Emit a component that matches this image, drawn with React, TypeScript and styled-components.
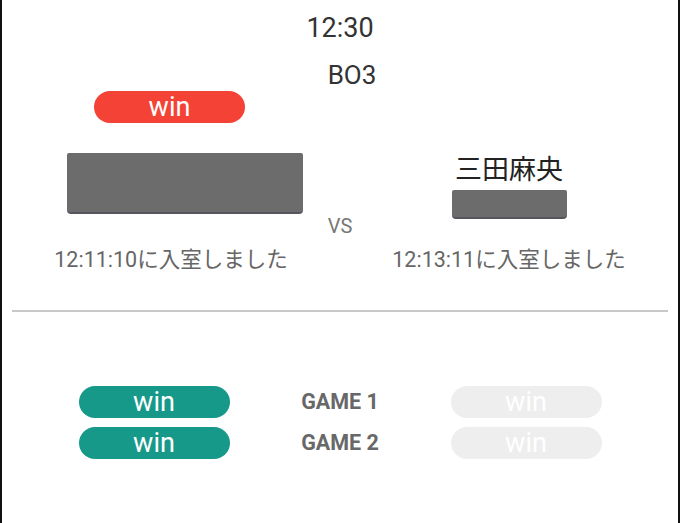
import React from "react";
import styled, { createGlobalStyle } from "styled-components";

const Global = createGlobalStyle`
  html, body { margin: 0; padding: 0; background: #ffffff; }
  body { font-family: Roboto, "Noto Sans CJK JP", sans-serif; }
`;

const Frame = styled.div`
  box-sizing: border-box;
  width: 680px;
  height: 523px;
  border-left: 2px solid #111;
  border-right: 2px solid #111;
  background: #fff;
  overflow: hidden;
`;

const Header = styled.header`
  display: flex;
  flex-direction: column;
  align-items: center;
  padding-top: 12px;
`;

const Clock = styled.div`
  font-size: 27px;
  line-height: 32px;
  color: #333;
`;

const Format = styled.div`
  margin-top: 15px;
  padding-left: 24px;
  font-size: 26px;
  line-height: 32px;
  color: #333;
`;

const PlayersGrid = styled.section`
  display: grid;
  grid-template-columns: 1fr 1fr;
`;

const PlayerCol = styled.div<{ $top?: number }>`
  display: flex;
  flex-direction: column;
  align-items: center;
  padding-top: ${(p) => p.$top ?? 0}px;
`;

const Pill = styled.div<{ $bg: string; $shift?: number }>`
  width: 151px;
  height: 32px;
  margin-left: ${(p) => p.$shift ?? 0}px;
  border-radius: 16px;
  background: ${(p) => p.$bg};
  color: #fff;
  font-size: 27px;
  line-height: 32px;
  text-align: center;
`;

const NameBlock = styled.div<{ $w: number; $h: number; $mt: number; $shift?: number }>`
  width: ${(p) => p.$w}px;
  height: ${(p) => p.$h}px;
  margin-top: ${(p) => p.$mt}px;
  margin-left: ${(p) => (p.$shift ?? 0) * 2}px;
  box-sizing: border-box;
  background: #6c6c6c;
  border-bottom: 2px solid #55555e;
  border-radius: 2px 2px 4px 4px;
`;

const PlayerName = styled.div`
  font-size: 27px;
  line-height: 32px;
  color: #222;
`;

const Vs = styled.div`
  margin-top: -2px;
  text-align: center;
  font-size: 20px;
  line-height: 18px;
  color: #777;
`;

const JoinRow = styled.div`
  display: grid;
  grid-template-columns: 1fr 1fr;
  margin-top: 13px;
`;

const JoinText = styled.div`
  text-align: center;
  font-size: 21.5px;
  line-height: 24px;
  color: #666;
`;

const Divider = styled.hr`
  margin: 38px 10px 0;
  border: none;
  height: 2px;
  background: #c9c9c9;
`;

const Games = styled.section`
  display: grid;
  grid-template-columns: repeat(3, 186px);
  justify-content: center;
  justify-items: center;
  align-items: center;
  row-gap: 9px;
  margin-top: 74px;
`;

const GameLabel = styled.div`
  font-size: 21.5px;
  font-weight: 700;
  color: #686868;
  line-height: 32px;
`;

const games = [
  { label: "GAME 1" },
  { label: "GAME 2" },
];

export default function App() {
  return (
    <>
      <Global />
      <Frame>
        <Header>
          <Clock>12:30</Clock>
          <Format>BO3</Format>
        </Header>
        <PlayersGrid>
          <PlayerCol>
            <Pill $bg="#f44336" $shift={-3}>win</Pill>
            <NameBlock $w={236} $h={61} $mt={30} $shift={14} />
          </PlayerCol>
          <PlayerCol $top={63}>
            <PlayerName>三田麻央</PlayerName>
            <NameBlock $w={115} $h={29} $mt={4} />
          </PlayerCol>
        </PlayersGrid>
        <Vs>VS</Vs>
        <JoinRow>
          <JoinText>12:11:10に入室しました</JoinText>
          <JoinText>12:13:11に入室しました</JoinText>
        </JoinRow>
        <Divider />
        <Games>
          {games.map((g) => (
            <React.Fragment key={g.label}>
              <Pill $bg="#17998a">win</Pill>
              <GameLabel>{g.label}</GameLabel>
              <Pill $bg="#eeeeee">win</Pill>
            </React.Fragment>
          ))}
        </Games>
      </Frame>
    </>
  );
}
